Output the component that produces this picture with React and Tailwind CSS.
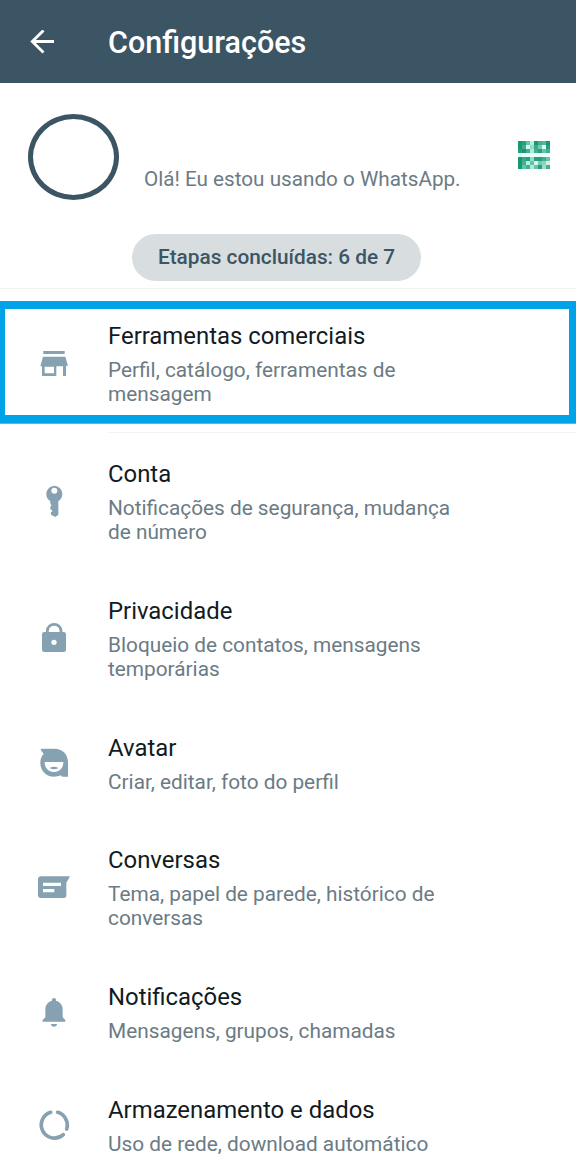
import React from "react";

const StoreIcon = () => (
  <svg viewBox="48 30 108 108" className="size-9" fill="#86a1b1">
    <path d="M70 45h64v9H70zM69 62h67l8 27h-6v31h-9V91h-20v29H66V91h-5zM74 92v20h28V92z" fillRule="evenodd" />
  </svg>
);

const KeyIcon = () => (
  <svg viewBox="48 39 108 108" className="size-9" fill="#86a1b1">
    <path d="M102 47c14 0 25 11 25 25 0 9-5 17-12 22v40l-9 7-13-7v-7l5-4-7-6v-7l4-5-4-3v-8c-8-5-12-12-12-21 0-14 10-25 23-25zM103 53a9 9 0 1 0 0 18 9 9 0 0 0 0-18z" fillRule="evenodd" />
  </svg>
);

const LockIcon = () => (
  <svg viewBox="48 30 108 108" className="size-9" fill="#86a1b1">
    <path d="M82 70V62a20.500 19 0 0 1 41 0v8" fill="none" stroke="#86a1b1" strokeWidth="8.500" />
    <path d="M73 66h58q7 0 7 7v46q0 7-7 7H73q-7 0-7-7V73q0-7 7-7zM102 89a8 8 0 1 0 0 16 8 8 0 0 0 0-16z" fillRule="evenodd" />
  </svg>
);

const AvatarIcon = () => (
  <svg viewBox="48 30 108 108" className="size-9" fill="#86a1b1">
    <path d="M64 41h38c26 0 42 17 42 41v43h-17l-5-4c-7 3-13 4-20 4-23 0-41-17-41-41 0-11 3-20 10-27-2-6-7-8-8-11-1-2-1-5 1-5zM74 81c0 19 12 30 28 30s28-11 28-30z" fillRule="evenodd" />
    <path d="M89 99q13-7 26 0-13 8-26 0z" />
  </svg>
);

const ChatIcon = () => (
  <svg viewBox="48 27 108 108" className="size-9" fill="#86a1b1">
    <path d="M63 49h87l-11 19v38q0 8-8 8H63q-9 0-9-9V58q0-9 9-9zM69 68v10h54V68zM69 87v10h34V87z" fillRule="evenodd" />
  </svg>
);

const BellIcon = () => (
  <svg viewBox="48 27 108 108" className="size-9" fill="#86a1b1">
    <path d="M96 47v-3q0-5 6-5t6 5v3c13 4 20 13 20 27v23l8 8v5H68v-5l8-8V74c0-14 7-23 20-27zM93 117h18q-1 8-9 8t-9-8z" />
  </svg>
);

const DataIcon = () => (
  <svg viewBox="48 36 108 108" className="size-9" fill="none" stroke="#86a1b1" strokeWidth="11" strokeLinecap="round">
    <path d="M92 52A39.500 39.500 0 1 0 130 119M113 52A39.500 39.500 0 0 1 140 102" />
  </svg>
);

const items = [
  { title: "Ferramentas comerciais", lines: ["Perfil, catálogo, ferramentas de", "mensagem"], Icon: StoreIcon, divider: true },
  { title: "Conta", lines: ["Notificações de segurança, mudança", "de número"], Icon: KeyIcon },
  { title: "Privacidade", lines: ["Bloqueio de contatos, mensagens", "temporárias"], Icon: LockIcon },
  { title: "Avatar", lines: ["Criar, editar, foto do perfil"], Icon: AvatarIcon, tight: true },
  { title: "Conversas", lines: ["Tema, papel de parede, histórico de", "conversas"], Icon: ChatIcon },
  { title: "Notificações", lines: ["Mensagens, grupos, chamadas"], Icon: BellIcon },
  { title: "Armazenamento e dados", lines: ["Uso de rede, download automático"], Icon: DataIcon },
];

const qrRows = [
  ["#149a70", "#27a17b", "#65c5ab", "#b5f1e2", "#149a70", "#48ad8e", "#55b698", "#149a70"],
  ["#149a70", "#48a98d", "#d7faf4", "#8de0ca", "#3ba888", "#72cbb4", "#d7fff6", "#279f7b"],
  ["#27a17b", "#149a70", "#48ad8e", "#a7eedb", "#48ad8e", "#27a17b", "#65c4a8", "#48ad8e"],
  ["#e6fffa", "#e6fffa", "#e6fffa", "#e6fffa", "#e6fffa", "#e6fffa", "#e6fffa", "#eafffb"],
  ["#149a70", "#3ba888", "#27a17b", "#8de0ca", "#27a17b", "#279f7b", "#48a98d", "#65c4aa"],
  ["#149a70", "#48ad8e", "#b5f1e2", "#65c5aa", "#e7eee9", "#72cbb4", "#8cd6c0", "#d5eee7"],
  ["#149a70", "#65c5aa", "#48ad8e", "#a9eedb", "#65c5aa", "#279f7b", "#a9d6ca", "#48ad8e"],
];

const QrCode = () => (
  <svg viewBox="0 0 8 7" className="h-7 w-8" shapeRendering="crispEdges">
    {qrRows.map((row, y) =>
      row.map((fill, x) => <rect key={`${x}-${y}`} x={x} y={y} width="1" height="1" fill={fill} />)
    )}
  </svg>
);

function SettingsRow({ title, lines, Icon, divider, tight }) {
  const spacing = divider ? "border-b border-[#f3f4f4] pb-[26px]" : tight ? "pb-[25px]" : "pb-[26px]";
  return (
    <li className="flex items-stretch">
      <div className="flex w-[108px] shrink-0 items-center justify-center pb-px">
        <Icon />
      </div>
      <div className={`flex-1 pt-[27px] ${spacing}`}>
        <h2 className="text-[23.9px] leading-7 text-[#111b21]">{title}</h2>
        <p className="mt-2 text-[20.8px] leading-6 text-[#6b7b84]">
          {lines.map((line) => (
            <span key={line} className="block whitespace-nowrap">{line}</span>
          ))}
        </p>
      </div>
    </li>
  );
}

export default function App() {
  return (
    <div className="relative h-[1170px] w-[576px] overflow-hidden bg-white font-['Roboto',sans-serif]">
      <header className="flex h-[83px] items-center bg-[#3c5564] text-white">
        <div className="flex w-[108px] pl-[30px]">
          <svg viewBox="0 0 24 24" className="size-6" fill="none" stroke="currentColor" strokeWidth="2.800">
            <path d="M24 11.500H2M13.500.4 2.300 11.500l11.200 11.100" />
          </svg>
        </div>
        <h1 className="pt-[2px] text-[30.5px] font-medium leading-9">Configurações</h1>
      </header>

      <section className="flex h-[206px] flex-col border-b border-[#f1f2f2]">
        <div className="flex h-[151px] items-start pl-7 pr-[26px]">
          <div className="mt-[31px] h-[86px] w-[91px] shrink-0 rounded-[50%] border-[5px] border-[#3c5564]" />
          <p className="ml-[25px] mt-[84px] flex-1 whitespace-nowrap text-[20.7px] leading-6 text-[#6b7b84]">
            Olá! Eu estou usando o WhatsApp.
          </p>
          <div className="mt-[58px]"><QrCode /></div>
        </div>
        <div className="ml-[132px] flex h-[47px] w-[289px] items-center justify-center rounded-full bg-[#d8dddf] pt-px text-[20.8px] font-medium text-[#3c5564]">
          <span className="whitespace-nowrap">Etapas concluídas: 6 de 7</span>
        </div>
      </section>

      <ul className="pt-[6px]">
        {items.map((item) => <SettingsRow key={item.title} {...item} />)}
      </ul>

      <div className="pointer-events-none absolute left-0 top-[301px] h-[123px] w-[576px] border-b border-[#ed8b3a]">
        <div className="h-full border-y-8 border-l-[5px] border-r-[7px] border-[#00a2e8]" />
      </div>
    </div>
  );
}
